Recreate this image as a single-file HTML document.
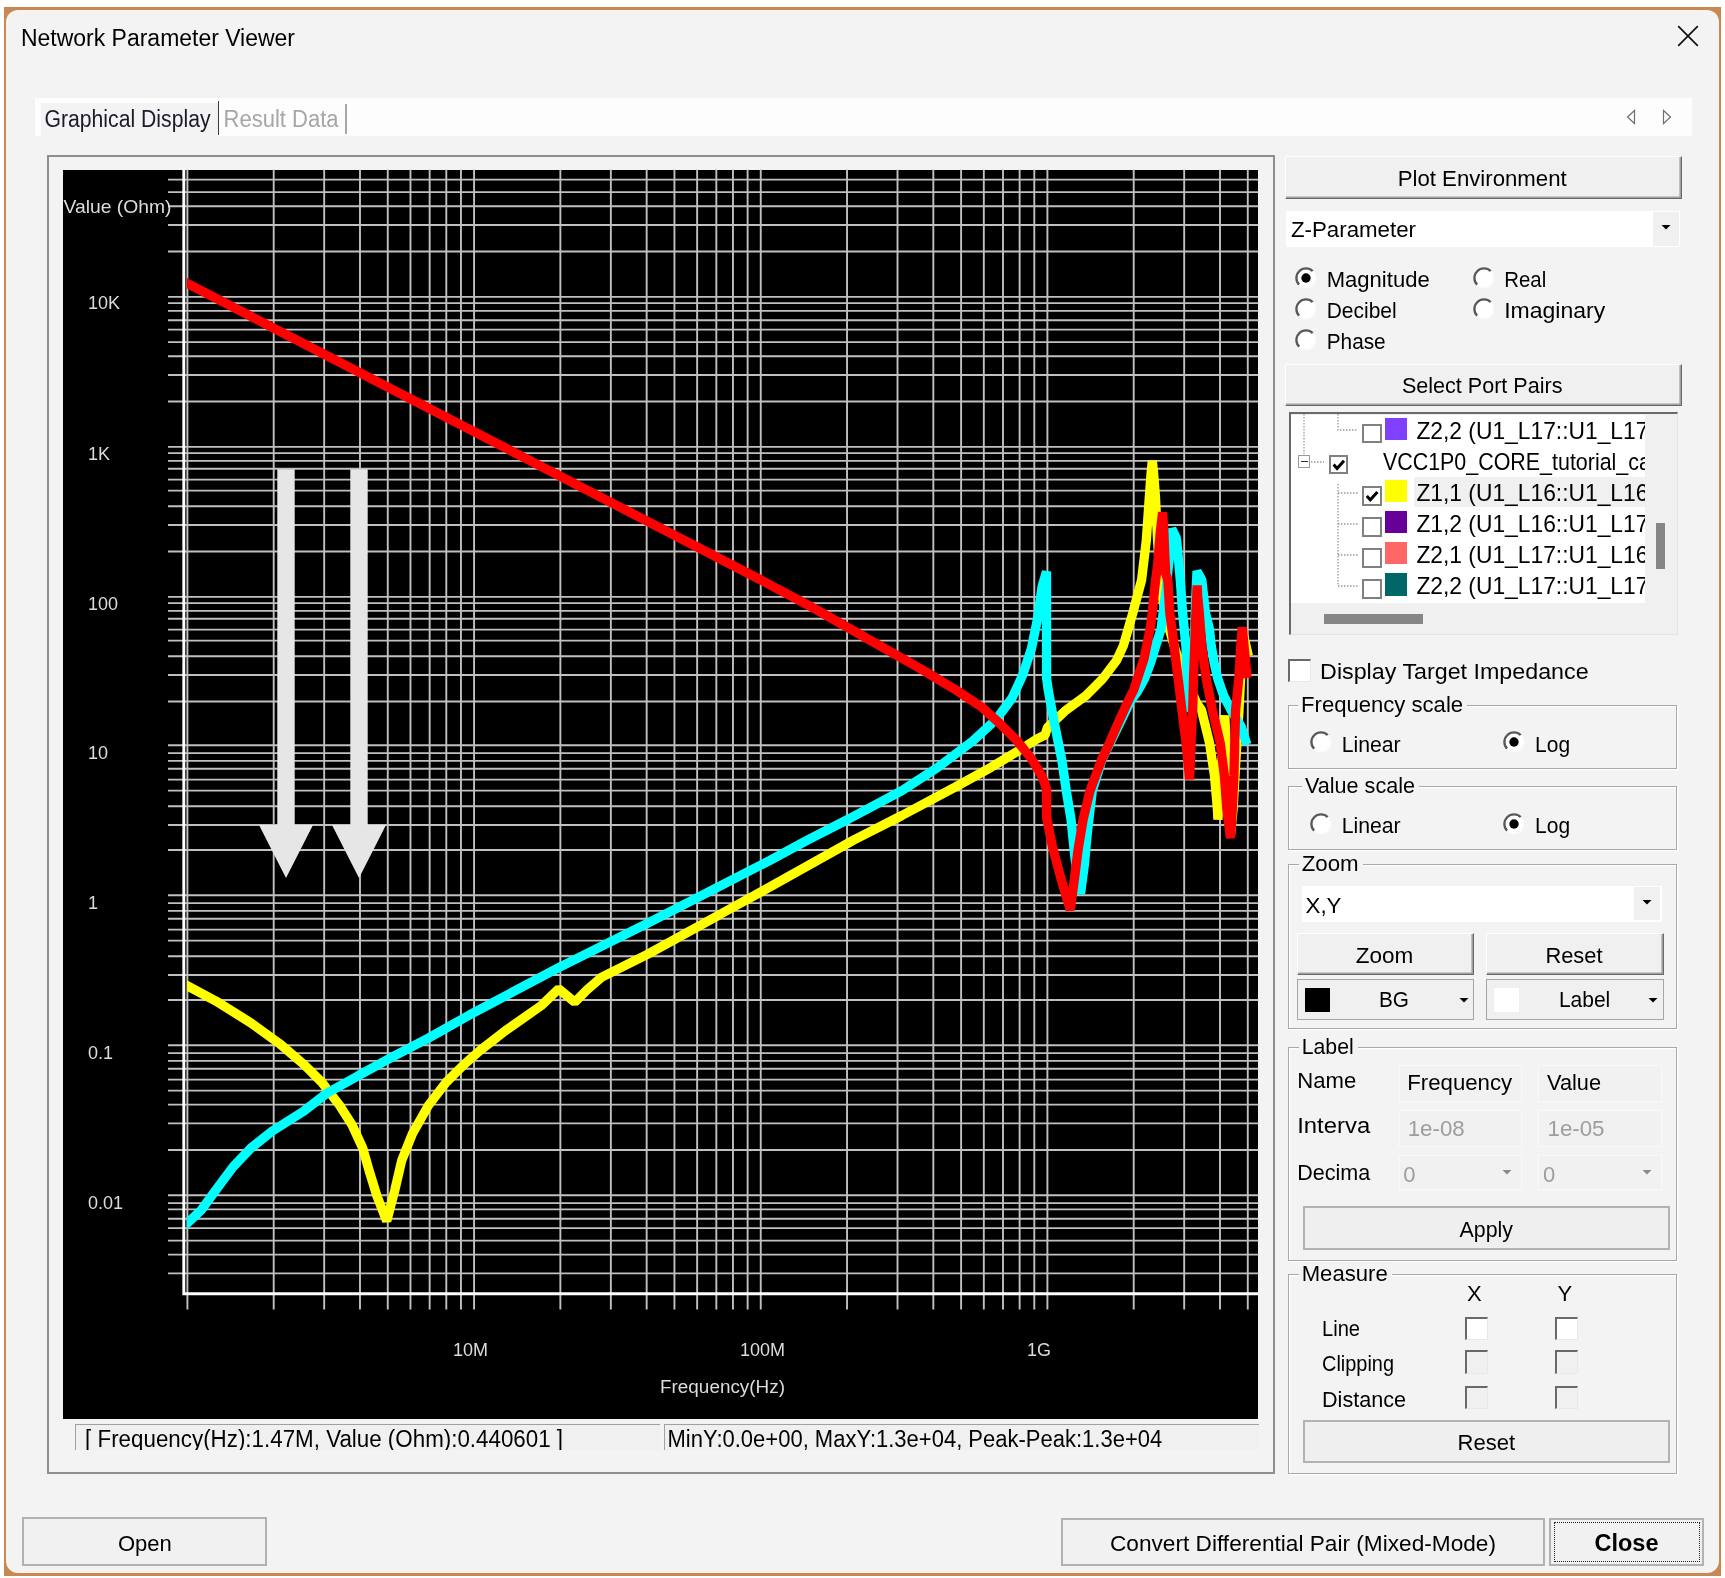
<!DOCTYPE html><html><head><meta charset="utf-8"><title>Network Parameter Viewer</title>
<style>html,body{margin:0;padding:0;background:#fff;}body{width:1725px;height:1578px;position:relative;overflow:hidden;font-family:"Liberation Sans", sans-serif;}div{box-sizing:border-box;}svg text{font-family:"Liberation Sans", sans-serif;}</style></head><body><div id="root" style="position:absolute;left:0;top:0;width:1725px;height:1578px;filter:blur(0.45px);">
<div style="position:absolute;left:4px;top:7.2px;width:1717.3px;height:1568.5px;background:#c98850;"></div>
<div style="position:absolute;left:6.4px;top:9.8px;width:1712.6px;height:1563.6px;background:#f3f3f3;border-radius:12px;"></div>
<div style="position:absolute;left:34.70px;top:97.80px;width:1657.00px;height:38.70px;background:#fdfdfd;"></div>
<div style="position:absolute;left:40.80px;top:103.10px;width:177.00px;height:33.40px;background:#f3f3f3;"></div>
<div style="position:absolute;left:217.60px;top:101.00px;width:1.60px;height:33.50px;background:#3c3c3c;"></div>
<div style="position:absolute;left:345.30px;top:104.00px;width:1.30px;height:30.00px;background:#a8a8a8;"></div>
<div style="position:absolute;left:46.60px;top:154.90px;width:1228.60px;height:1319.30px;border:2px solid #8e8e8e;"></div>
<div style="position:absolute;left:63.00px;top:169.60px;width:1195.40px;height:1249.60px;background:#000;"></div>
<svg width="1725" height="1578" viewBox="0 0 1725 1578" style="position:absolute;left:0;top:0">
<g stroke="#c0c0c0" stroke-width="1.9" fill="none" shape-rendering="geometricPrecision"><line x1="168" y1="179.66" x2="1258.4" y2="179.66"/><line x1="168" y1="192.16" x2="1258.4" y2="192.16"/><line x1="168" y1="206.22" x2="1258.4" y2="206.22"/><line x1="168" y1="224.97" x2="1258.4" y2="224.97"/><line x1="168" y1="251.54" x2="1258.4" y2="251.54"/><line x1="168" y1="296.85" x2="1258.4" y2="296.85"/><line x1="168" y1="303.10" x2="1258.4" y2="303.10"/><line x1="168" y1="310.91" x2="1258.4" y2="310.91"/><line x1="168" y1="320.29" x2="1258.4" y2="320.29"/><line x1="168" y1="329.66" x2="1258.4" y2="329.66"/><line x1="168" y1="342.16" x2="1258.4" y2="342.16"/><line x1="168" y1="356.22" x2="1258.4" y2="356.22"/><line x1="168" y1="374.97" x2="1258.4" y2="374.97"/><line x1="168" y1="401.54" x2="1258.4" y2="401.54"/><line x1="168" y1="446.85" x2="1258.4" y2="446.85"/><line x1="168" y1="453.10" x2="1258.4" y2="453.10"/><line x1="168" y1="460.91" x2="1258.4" y2="460.91"/><line x1="168" y1="468.72" x2="1258.4" y2="468.72"/><line x1="168" y1="479.66" x2="1258.4" y2="479.66"/><line x1="168" y1="490.60" x2="1258.4" y2="490.60"/><line x1="168" y1="506.22" x2="1258.4" y2="506.22"/><line x1="168" y1="524.97" x2="1258.4" y2="524.97"/><line x1="168" y1="551.54" x2="1258.4" y2="551.54"/><line x1="168" y1="596.85" x2="1258.4" y2="596.85"/><line x1="168" y1="603.10" x2="1258.4" y2="603.10"/><line x1="168" y1="610.91" x2="1258.4" y2="610.91"/><line x1="168" y1="618.72" x2="1258.4" y2="618.72"/><line x1="168" y1="629.66" x2="1258.4" y2="629.66"/><line x1="168" y1="640.60" x2="1258.4" y2="640.60"/><line x1="168" y1="656.22" x2="1258.4" y2="656.22"/><line x1="168" y1="674.97" x2="1258.4" y2="674.97"/><line x1="168" y1="701.54" x2="1258.4" y2="701.54"/><line x1="168" y1="745.29" x2="1258.4" y2="745.29"/><line x1="168" y1="753.10" x2="1258.4" y2="753.10"/><line x1="168" y1="760.91" x2="1258.4" y2="760.91"/><line x1="168" y1="768.72" x2="1258.4" y2="768.72"/><line x1="168" y1="779.66" x2="1258.4" y2="779.66"/><line x1="168" y1="790.60" x2="1258.4" y2="790.60"/><line x1="168" y1="806.22" x2="1258.4" y2="806.22"/><line x1="168" y1="824.97" x2="1258.4" y2="824.97"/><line x1="168" y1="849.97" x2="1258.4" y2="849.97"/><line x1="168" y1="895.29" x2="1258.4" y2="895.29"/><line x1="168" y1="903.10" x2="1258.4" y2="903.10"/><line x1="168" y1="910.91" x2="1258.4" y2="910.91"/><line x1="168" y1="918.72" x2="1258.4" y2="918.72"/><line x1="168" y1="929.66" x2="1258.4" y2="929.66"/><line x1="168" y1="940.60" x2="1258.4" y2="940.60"/><line x1="168" y1="956.22" x2="1258.4" y2="956.22"/><line x1="168" y1="974.97" x2="1258.4" y2="974.97"/><line x1="168" y1="999.97" x2="1258.4" y2="999.97"/><line x1="168" y1="1045.29" x2="1258.4" y2="1045.29"/><line x1="168" y1="1053.10" x2="1258.4" y2="1053.10"/><line x1="168" y1="1060.91" x2="1258.4" y2="1060.91"/><line x1="168" y1="1068.72" x2="1258.4" y2="1068.72"/><line x1="168" y1="1079.66" x2="1258.4" y2="1079.66"/><line x1="168" y1="1090.60" x2="1258.4" y2="1090.60"/><line x1="168" y1="1104.66" x2="1258.4" y2="1104.66"/><line x1="168" y1="1123.41" x2="1258.4" y2="1123.41"/><line x1="168" y1="1149.97" x2="1258.4" y2="1149.97"/><line x1="168" y1="1195.29" x2="1258.4" y2="1195.29"/><line x1="168" y1="1203.10" x2="1258.4" y2="1203.10"/><line x1="168" y1="1209.35" x2="1258.4" y2="1209.35"/><line x1="168" y1="1218.72" x2="1258.4" y2="1218.72"/><line x1="168" y1="1228.10" x2="1258.4" y2="1228.10"/><line x1="168" y1="1240.60" x2="1258.4" y2="1240.60"/><line x1="168" y1="1254.66" x2="1258.4" y2="1254.66"/><line x1="168" y1="1273.41" x2="1258.4" y2="1273.41"/><line x1="187.40" y1="169.6" x2="187.40" y2="1309.5"/><line x1="273.70" y1="169.6" x2="273.70" y2="1309.5"/><line x1="324.18" y1="169.6" x2="324.18" y2="1309.5"/><line x1="359.99" y1="169.6" x2="359.99" y2="1309.5"/><line x1="387.77" y1="169.6" x2="387.77" y2="1309.5"/><line x1="410.47" y1="169.6" x2="410.47" y2="1309.5"/><line x1="429.66" y1="169.6" x2="429.66" y2="1309.5"/><line x1="446.29" y1="169.6" x2="446.29" y2="1309.5"/><line x1="460.95" y1="169.6" x2="460.95" y2="1309.5"/><line x1="474.07" y1="169.6" x2="474.07" y2="1309.5"/><line x1="560.37" y1="169.6" x2="560.37" y2="1309.5"/><line x1="610.85" y1="169.6" x2="610.85" y2="1309.5"/><line x1="646.66" y1="169.6" x2="646.66" y2="1309.5"/><line x1="674.44" y1="169.6" x2="674.44" y2="1309.5"/><line x1="697.14" y1="169.6" x2="697.14" y2="1309.5"/><line x1="716.33" y1="169.6" x2="716.33" y2="1309.5"/><line x1="732.96" y1="169.6" x2="732.96" y2="1309.5"/><line x1="747.62" y1="169.6" x2="747.62" y2="1309.5"/><line x1="760.74" y1="169.6" x2="760.74" y2="1309.5"/><line x1="847.04" y1="169.6" x2="847.04" y2="1309.5"/><line x1="897.52" y1="169.6" x2="897.52" y2="1309.5"/><line x1="933.33" y1="169.6" x2="933.33" y2="1309.5"/><line x1="961.11" y1="169.6" x2="961.11" y2="1309.5"/><line x1="983.81" y1="169.6" x2="983.81" y2="1309.5"/><line x1="1003.00" y1="169.6" x2="1003.00" y2="1309.5"/><line x1="1019.63" y1="169.6" x2="1019.63" y2="1309.5"/><line x1="1034.29" y1="169.6" x2="1034.29" y2="1309.5"/><line x1="1047.41" y1="169.6" x2="1047.41" y2="1309.5"/><line x1="1133.71" y1="169.6" x2="1133.71" y2="1309.5"/><line x1="1184.19" y1="169.6" x2="1184.19" y2="1309.5"/><line x1="1220.00" y1="169.6" x2="1220.00" y2="1309.5"/><line x1="1247.78" y1="169.6" x2="1247.78" y2="1309.5"/></g>
<defs><clipPath id="pc"><rect x="187" y="170" width="1071" height="1123"/></clipPath></defs>
<path d="M183.8 169.6 V1293.8 H1258.4" stroke="#fff" stroke-width="2.9" fill="none"/>
<path d="M180.0 982.0 L187.1 985.7 L215.5 1000.8 L251.0 1023.0 L279.3 1043.4 L304.2 1064.7 L321.9 1082.4 L339.7 1105.5 L352.1 1125.0 L362.7 1148.0 L369.8 1172.9 L376.9 1195.9 L386.7 1221.0 L394.7 1190.6 L401.7 1160.5 L412.4 1133.8 L428.4 1105.5 L446.1 1082.4 L463.8 1064.7 L480.0 1050.5 L505.5 1030.6 L541.0 1005.8 L558.7 988.9 L574.7 1002.2 L587.1 989.8 L601.3 977.4 L647.4 954.3 L718.4 915.3 L770.0 886.9 L854.0 839.9 L901.9 815.5 L955.1 787.1 L990.6 767.6 L1017.2 751.6 L1036.7 739.2 L1045.0 735.0 L1047.5 727.5 L1064.9 711.1 L1085.8 695.8 L1102.5 679.0 L1116.5 660.5 L1123.3 645.9 L1132.8 613.0 L1141.6 580.0 L1146.3 540.6 L1149.4 496.1 L1151.1 473.1 L1152.3 460.7 L1153.6 473.1 L1155.4 496.1 L1157.6 541.0 L1161.0 590.0 L1168.0 625.0 L1176.0 652.0 L1186.0 678.0 L1196.9 703.6 L1201.5 710.0 L1209.5 742.9 L1214.5 775.9 L1217.4 808.8 L1217.9 819.6 L1224.8 715.4 L1230.5 835.0 L1233.1 808.8 L1236.4 751.2 L1239.0 710.0 L1241.0 670.0 L1243.0 633.0 L1248.4 656.0" stroke="#ffff00" stroke-width="9.3" fill="none" stroke-linejoin="bevel" stroke-linecap="butt" clip-path="url(#pc)"/>
<path d="M180.0 1229.0 L187.1 1223.4 L201.3 1210.1 L215.5 1190.6 L233.2 1166.7 L251.0 1148.0 L272.2 1131.2 L304.2 1110.8 L327.2 1093.0 L357.4 1076.2 L392.9 1056.7 L428.4 1038.1 L470.0 1014.7 L558.7 967.6 L647.4 923.3 L718.4 886.9 L770.0 860.3 L807.9 839.9 L848.7 819.0 L901.9 790.6 L937.4 767.6 L972.9 740.9 L995.9 719.7 L1011.9 698.4 L1022.6 675.3 L1031.4 648.7 L1037.6 618.5 L1042.1 586.6 L1046.5 571.5 L1046.6 678.0 L1048.2 690.0 L1054.3 722.9 L1061.8 760.0 L1066.3 790.9 L1071.1 820.0 L1075.0 858.0 L1080.5 894.0 L1084.5 863.7 L1086.8 838.0 L1088.8 820.0 L1092.3 790.9 L1098.1 772.4 L1101.8 760.0 L1119.9 722.9 L1130.6 700.7 L1137.2 692.0 L1144.5 678.8 L1150.7 662.4 L1155.7 645.9 L1161.0 629.4 L1163.5 610.0 L1166.0 590.0 L1169.0 560.0 L1171.8 528.8 L1176.3 538.0 L1177.5 548.8 L1180.3 580.0 L1182.6 613.0 L1185.9 645.9 L1187.2 678.8 L1187.3 712.0 L1190.0 680.0 L1194.5 640.0 L1195.5 604.7 L1197.0 571.3 L1201.8 580.0 L1205.5 613.0 L1209.5 629.4 L1211.2 645.9 L1214.1 662.4 L1217.8 678.8 L1223.5 695.3 L1231.0 710.0 L1241.1 726.5 L1246.9 744.6" stroke="#00ffff" stroke-width="9.3" fill="none" stroke-linejoin="bevel" stroke-linecap="butt" clip-path="url(#pc)"/>
<path d="M180.0 279.7 L187.7 283.7 L760.0 579.5 L813.2 607.9 L866.4 638.1 L919.7 668.2 L955.1 689.5 L981.8 707.2 L999.5 723.2 L1017.2 741.0 L1031.4 758.7 L1042.1 776.4 L1046.5 788.8 L1046.7 818.0 L1052.3 846.0 L1060.7 877.6 L1070.2 910.0 L1074.6 877.6 L1078.1 849.7 L1083.0 820.0 L1090.0 790.9 L1101.5 760.0 L1108.1 746.0 L1118.2 722.9 L1128.3 700.7 L1133.7 690.0 L1144.0 658.8 L1150.7 625.9 L1153.0 605.0 L1155.6 580.0 L1157.6 565.3 L1158.9 548.8 L1160.1 534.0 L1162.6 512.2 L1163.9 532.4 L1164.7 553.0 L1165.7 573.6 L1167.8 580.0 L1169.8 613.0 L1174.1 645.9 L1178.2 678.8 L1181.9 710.0 L1186.1 742.9 L1189.6 779.2 L1191.1 742.9 L1192.7 710.0 L1193.5 678.8 L1194.7 645.9 L1195.9 613.0 L1197.2 585.4 L1197.7 596.5 L1199.3 613.0 L1201.8 645.9 L1206.3 678.8 L1212.4 710.0 L1220.2 742.9 L1224.4 775.9 L1226.8 808.8 L1230.6 838.1 L1232.3 808.8 L1233.9 775.9 L1234.7 742.9 L1235.6 710.0 L1238.8 678.8 L1240.8 645.9 L1242.3 627.4 L1247.1 678.0" stroke="#ff0000" stroke-width="9.3" fill="none" stroke-linejoin="bevel" stroke-linecap="butt" clip-path="url(#pc)"/>
<path d="M277.3 469.3 H294.7 V825 H313 L286 878 L259 825 H277.3 Z" fill="#e6e6e6"/>
<path d="M350.3 469.3 H367.7 V825 H386 L359 878 L332 825 H350.3 Z" fill="#e6e6e6"/>
</svg>
<svg width="24" height="24" style="position:absolute;left:1676px;top:24px"><path d="M2.2 2.2 L21.8 21.8 M21.8 2.2 L2.2 21.8" stroke="#111" stroke-width="1.7" fill="none"/></svg>
<svg width="60" height="20" style="position:absolute;left:1620px;top:107px"><path d="M14.5 3.5 L7.5 10 L14.5 16.5 Z M43.5 3.5 L50.5 10 L43.5 16.5 Z" stroke="#707070" stroke-width="1.2" fill="none"/></svg>
<div style="position:absolute;left:75.20px;top:1423.70px;width:584.50px;height:26.00px;background:#f0f0f0;border-top:1.6px solid #a0a0a0;border-left:1.6px solid #a0a0a0;"></div>
<div style="position:absolute;left:663.70px;top:1423.70px;width:595.00px;height:26.00px;background:#f0f0f0;border-top:1.6px solid #a0a0a0;border-left:1.6px solid #a0a0a0;"></div>
<div style="position:absolute;left:76px;top:1425px;width:1182px;height:24.7px;overflow:hidden">
<svg width="1182" height="40" style="position:absolute;left:0;top:0"><text x="9.1" y="21.5" font-size="23" fill="#000" textLength="478" lengthAdjust="spacingAndGlyphs">[ Frequency(Hz):1.47M, Value (Ohm):0.440601 ]</text><text x="591.5" y="21.5" font-size="23" fill="#000" textLength="494.7" lengthAdjust="spacingAndGlyphs">MinY:0.0e+00, MaxY:1.3e+04, Peak-Peak:1.3e+04</text></svg></div>
<div style="position:absolute;left:1284.50px;top:156.40px;width:397.50px;height:43.00px;background:#f0f0f0;border-top:1.6px solid #fff;border-left:1.6px solid #fff;border-right:1.6px solid #696969;border-bottom:1.6px solid #696969;box-shadow:inset -1.6px -1.6px 0 #a0a0a0;"></div>
<div style="position:absolute;left:1285.80px;top:210.70px;width:394.20px;height:36.10px;background:#fff;"></div>
<div style="position:absolute;left:1652.50px;top:212.00px;width:26.50px;height:33.50px;background:#f0f0f0;"></div>
<svg width="14" height="10" style="position:absolute;left:1658.5px;top:223.0px"><path d="M2.5 2 H11.5 L7 6.5 Z" fill="#000"/></svg>
<svg width="26" height="26" style="position:absolute;left:1292.6px;top:264.5px"><circle cx="13" cy="13" r="9.6" fill="#fff"/><path d="M6.21 19.79 A9.6 9.6 0 0 1 19.79 6.21" stroke="#585858" stroke-width="2.3" fill="none"/><path d="M6.21 19.79 A9.6 9.6 0 0 0 19.79 6.21" stroke="#fbfbfb" stroke-width="1.8" fill="none"/><circle cx="13" cy="13" r="4.7" fill="#000"/></svg>
<svg width="26" height="26" style="position:absolute;left:1292.6px;top:295.5px"><circle cx="13" cy="13" r="9.6" fill="#fff"/><path d="M6.21 19.79 A9.6 9.6 0 0 1 19.79 6.21" stroke="#585858" stroke-width="2.3" fill="none"/><path d="M6.21 19.79 A9.6 9.6 0 0 0 19.79 6.21" stroke="#fbfbfb" stroke-width="1.8" fill="none"/></svg>
<svg width="26" height="26" style="position:absolute;left:1292.6px;top:326.5px"><circle cx="13" cy="13" r="9.6" fill="#fff"/><path d="M6.21 19.79 A9.6 9.6 0 0 1 19.79 6.21" stroke="#585858" stroke-width="2.3" fill="none"/><path d="M6.21 19.79 A9.6 9.6 0 0 0 19.79 6.21" stroke="#fbfbfb" stroke-width="1.8" fill="none"/></svg>
<svg width="26" height="26" style="position:absolute;left:1470.7px;top:264.5px"><circle cx="13" cy="13" r="9.6" fill="#fff"/><path d="M6.21 19.79 A9.6 9.6 0 0 1 19.79 6.21" stroke="#585858" stroke-width="2.3" fill="none"/><path d="M6.21 19.79 A9.6 9.6 0 0 0 19.79 6.21" stroke="#fbfbfb" stroke-width="1.8" fill="none"/></svg>
<svg width="26" height="26" style="position:absolute;left:1470.7px;top:295.5px"><circle cx="13" cy="13" r="9.6" fill="#fff"/><path d="M6.21 19.79 A9.6 9.6 0 0 1 19.79 6.21" stroke="#585858" stroke-width="2.3" fill="none"/><path d="M6.21 19.79 A9.6 9.6 0 0 0 19.79 6.21" stroke="#fbfbfb" stroke-width="1.8" fill="none"/></svg>
<div style="position:absolute;left:1284.50px;top:363.70px;width:397.50px;height:42.70px;background:#f0f0f0;border-top:1.6px solid #fff;border-left:1.6px solid #fff;border-right:1.6px solid #696969;border-bottom:1.6px solid #696969;box-shadow:inset -1.6px -1.6px 0 #a0a0a0;"></div>
<div style="position:absolute;left:1288.50px;top:411.90px;width:389.00px;height:223.00px;background:#f0f0f0;border-top:2.6px solid #696969;border-left:2.6px solid #696969;border-right:1.6px solid #e3e3e3;border-bottom:1.6px solid #e3e3e3;"></div>
<div style="position:absolute;left:1291.00px;top:414.50px;width:353.60px;height:188.60px;background:#fff;"></div>
<div style="position:absolute;left:1413.80px;top:476.50px;width:230.80px;height:30.30px;background:#f0f0f0;"></div>
<div style="position:absolute;left:1655.60px;top:522.70px;width:9.60px;height:46.10px;background:#868686;"></div>
<div style="position:absolute;left:1323.50px;top:614.20px;width:99.00px;height:9.50px;background:#868686;"></div>
<svg width="120" height="200" style="position:absolute;left:1291px;top:414px" fill="none" stroke="#9a9a9a" stroke-width="1.3" stroke-dasharray="1.5 1.5"><path d="M13 0 V40 M47 0 V16 H67 M20 48 H33 M47 70 V172 M47 79 H67 M47 110 H67 M47 141 H67 M47 172 H67"/></svg>
<div style="position:absolute;left:1297.70px;top:455.00px;width:12.60px;height:12.60px;background:#fff;border:1.3px solid #9a9a9a;"></div>
<div style="position:absolute;left:1300.50px;top:460.60px;width:7.00px;height:1.60px;background:#333;"></div>
<div style="position:absolute;left:1291px;top:414.5px;width:353.6px;height:188.6px;overflow:hidden">
<div style="position:absolute;left:94.3px;top:3.4px;width:22px;height:22.2px;background:#8040ff"></div>
<div style="position:absolute;left:94.3px;top:65.6px;width:22px;height:22.2px;background:#ffff00"></div>
<div style="position:absolute;left:94.3px;top:96.7px;width:22px;height:22.2px;background:#660099"></div>
<div style="position:absolute;left:94.3px;top:127.8px;width:22px;height:22.2px;background:#ff6666"></div>
<div style="position:absolute;left:94.3px;top:158.9px;width:22px;height:22.2px;background:#006666"></div>
</div>
<div style="position:absolute;left:1362.30px;top:423.70px;width:19.80px;height:19.80px;background:#fff;border:2.6px solid #808080;"></div>
<div style="position:absolute;left:1362.30px;top:485.90px;width:19.80px;height:19.80px;background:#fff;border:2.6px solid #808080;"></div>
<svg width="19.8" height="19.8" style="position:absolute;left:1362.3px;top:485.9px"><path d="M4.752 9.9 L8.316 13.86 L15.444 5.94" stroke="#000" stroke-width="3" fill="none"/></svg>
<div style="position:absolute;left:1362.30px;top:517.00px;width:19.80px;height:19.80px;background:#fff;border:2.6px solid #808080;"></div>
<div style="position:absolute;left:1362.30px;top:548.10px;width:19.80px;height:19.80px;background:#fff;border:2.6px solid #808080;"></div>
<div style="position:absolute;left:1362.30px;top:579.20px;width:19.80px;height:19.80px;background:#fff;border:2.6px solid #808080;"></div>
<div style="position:absolute;left:1328.60px;top:454.60px;width:19.20px;height:19.20px;background:#fff;border:2.6px solid #808080;"></div>
<svg width="19.2" height="19.2" style="position:absolute;left:1328.6px;top:454.6px"><path d="M4.608 9.6 L8.064 13.44 L14.975999999999999 5.76" stroke="#000" stroke-width="3" fill="none"/></svg>
<div style="position:absolute;left:1291px;top:414.5px;width:353.6px;height:188.6px;overflow:hidden"><svg width="500" height="200" style="position:absolute;left:0;top:0">
<text x="125.4" y="23.7" font-size="24.5" fill="#000" textLength="232" lengthAdjust="spacingAndGlyphs">Z2,2 (U1_L17::U1_L17</text>
<text x="125.4" y="85.9" font-size="24.5" fill="#000" textLength="232" lengthAdjust="spacingAndGlyphs">Z1,1 (U1_L16::U1_L16</text>
<text x="125.4" y="117.0" font-size="24.5" fill="#000" textLength="232" lengthAdjust="spacingAndGlyphs">Z1,2 (U1_L16::U1_L17</text>
<text x="125.4" y="148.1" font-size="24.5" fill="#000" textLength="232" lengthAdjust="spacingAndGlyphs">Z2,1 (U1_L17::U1_L16</text>
<text x="125.4" y="179.2" font-size="24.5" fill="#000" textLength="232" lengthAdjust="spacingAndGlyphs">Z2,2 (U1_L17::U1_L17</text>
<text x="91.9" y="54.6" font-size="24.5" fill="#000" textLength="268" lengthAdjust="spacingAndGlyphs">VCC1P0_CORE_tutorial_ca</text>
</svg></div>
<div style="position:absolute;left:1288.00px;top:658.50px;width:23.00px;height:23.00px;background:#fff;border-top:2.4px solid #696969;border-left:2.4px solid #696969;border-right:1.6px solid #e8e8e8;border-bottom:1.6px solid #e8e8e8;"></div>
<div style="position:absolute;left:1287.90px;top:705.40px;width:389.60px;height:63.30px;border:1.9px solid #a9a9a9;box-shadow:1.3px 1.3px 0 #fff, inset 1.3px 1.3px 0 #fff;"></div>
<div style="position:absolute;left:1298.10px;top:693.40px;width:169.00px;height:24.00px;background:#f3f3f3;"></div>
<svg width="26" height="26" style="position:absolute;left:1308.4px;top:729.4px"><circle cx="13" cy="13" r="9.6" fill="#fff"/><path d="M6.21 19.79 A9.6 9.6 0 0 1 19.79 6.21" stroke="#585858" stroke-width="2.3" fill="none"/><path d="M6.21 19.79 A9.6 9.6 0 0 0 19.79 6.21" stroke="#fbfbfb" stroke-width="1.8" fill="none"/></svg>
<svg width="26" height="26" style="position:absolute;left:1501.0px;top:729.4px"><circle cx="13" cy="13" r="9.6" fill="#fff"/><path d="M6.21 19.79 A9.6 9.6 0 0 1 19.79 6.21" stroke="#585858" stroke-width="2.3" fill="none"/><path d="M6.21 19.79 A9.6 9.6 0 0 0 19.79 6.21" stroke="#fbfbfb" stroke-width="1.8" fill="none"/><circle cx="13" cy="13" r="4.7" fill="#000"/></svg>
<div style="position:absolute;left:1287.90px;top:786.40px;width:389.60px;height:63.30px;border:1.9px solid #a9a9a9;box-shadow:1.3px 1.3px 0 #fff, inset 1.3px 1.3px 0 #fff;"></div>
<div style="position:absolute;left:1302.00px;top:774.40px;width:117.00px;height:24.00px;background:#f3f3f3;"></div>
<svg width="26" height="26" style="position:absolute;left:1308.4px;top:810.6px"><circle cx="13" cy="13" r="9.6" fill="#fff"/><path d="M6.21 19.79 A9.6 9.6 0 0 1 19.79 6.21" stroke="#585858" stroke-width="2.3" fill="none"/><path d="M6.21 19.79 A9.6 9.6 0 0 0 19.79 6.21" stroke="#fbfbfb" stroke-width="1.8" fill="none"/></svg>
<svg width="26" height="26" style="position:absolute;left:1501.0px;top:810.6px"><circle cx="13" cy="13" r="9.6" fill="#fff"/><path d="M6.21 19.79 A9.6 9.6 0 0 1 19.79 6.21" stroke="#585858" stroke-width="2.3" fill="none"/><path d="M6.21 19.79 A9.6 9.6 0 0 0 19.79 6.21" stroke="#fbfbfb" stroke-width="1.8" fill="none"/><circle cx="13" cy="13" r="4.7" fill="#000"/></svg>
<div style="position:absolute;left:1287.90px;top:864.40px;width:389.60px;height:165.00px;border:1.9px solid #a9a9a9;box-shadow:1.3px 1.3px 0 #fff, inset 1.3px 1.3px 0 #fff;"></div>
<div style="position:absolute;left:1298.70px;top:852.40px;width:64.00px;height:24.00px;background:#f3f3f3;"></div>
<div style="position:absolute;left:1301.70px;top:885.60px;width:360.80px;height:36.10px;background:#fff;"></div>
<div style="position:absolute;left:1634.00px;top:887.00px;width:26.40px;height:33.40px;background:#f0f0f0;"></div>
<svg width="14" height="10" style="position:absolute;left:1640.0px;top:898.0px"><path d="M2.5 2 H11.5 L7 6.5 Z" fill="#000"/></svg>
<div style="position:absolute;left:1297.20px;top:933.30px;width:176.70px;height:42.00px;background:#f0f0f0;border-top:1.6px solid #fff;border-left:1.6px solid #fff;border-right:1.6px solid #696969;border-bottom:1.6px solid #696969;box-shadow:inset -1.6px -1.6px 0 #a0a0a0;"></div>
<div style="position:absolute;left:1486.30px;top:933.30px;width:177.50px;height:42.00px;background:#f0f0f0;border-top:1.6px solid #fff;border-left:1.6px solid #fff;border-right:1.6px solid #696969;border-bottom:1.6px solid #696969;box-shadow:inset -1.6px -1.6px 0 #a0a0a0;"></div>
<div style="position:absolute;left:1297.20px;top:978.70px;width:176.70px;height:41.40px;background:#f0f0f0;border:1.7px solid #a6a6a6;"></div>
<div style="position:absolute;left:1486.30px;top:978.70px;width:177.50px;height:41.40px;background:#f0f0f0;border:1.7px solid #a6a6a6;"></div>
<div style="position:absolute;left:1304.80px;top:987.70px;width:24.80px;height:24.80px;background:#000;"></div>
<div style="position:absolute;left:1494.20px;top:987.70px;width:25.00px;height:24.80px;background:#fff;"></div>
<svg width="14" height="10" style="position:absolute;left:1456.9px;top:995.5px"><path d="M2.5 2 H11.5 L7 6.5 Z" fill="#000"/></svg>
<svg width="14" height="10" style="position:absolute;left:1646.3px;top:995.5px"><path d="M2.5 2 H11.5 L7 6.5 Z" fill="#000"/></svg>
<div style="position:absolute;left:1287.90px;top:1047.10px;width:389.60px;height:213.70px;border:1.9px solid #a9a9a9;box-shadow:1.3px 1.3px 0 #fff, inset 1.3px 1.3px 0 #fff;"></div>
<div style="position:absolute;left:1298.70px;top:1035.10px;width:59.00px;height:24.00px;background:#f3f3f3;"></div>
<div style="position:absolute;left:1398.50px;top:1064.80px;width:123.40px;height:36.90px;background:#f1f1f1;border:1.6px solid #f9f9f9;"></div>
<div style="position:absolute;left:1537.70px;top:1064.80px;width:124.00px;height:36.90px;background:#f1f1f1;border:1.6px solid #f9f9f9;"></div>
<div style="position:absolute;left:1398.50px;top:1109.90px;width:123.40px;height:37.00px;background:#f1f1f1;border:1.6px solid #f9f9f9;"></div>
<div style="position:absolute;left:1537.70px;top:1109.90px;width:124.00px;height:37.00px;background:#f1f1f1;border:1.6px solid #f9f9f9;"></div>
<div style="position:absolute;left:1398.50px;top:1155.30px;width:123.40px;height:35.10px;background:#f1f1f1;border:1.6px solid #f9f9f9;"></div>
<div style="position:absolute;left:1537.70px;top:1155.30px;width:124.00px;height:35.10px;background:#f1f1f1;border:1.6px solid #f9f9f9;"></div>
<svg width="14" height="10" style="position:absolute;left:1500.4px;top:1168.0px"><path d="M2.5 2 H11.5 L7 6.5 Z" fill="#8a8a8a"/></svg>
<svg width="14" height="10" style="position:absolute;left:1640.2px;top:1168.0px"><path d="M2.5 2 H11.5 L7 6.5 Z" fill="#8a8a8a"/></svg>
<div style="position:absolute;left:1303.00px;top:1206.20px;width:366.60px;height:44.10px;background:#efefef;border:2px solid #b2b2b2;"></div>
<div style="position:absolute;left:1287.90px;top:1274.30px;width:389.60px;height:199.90px;border:1.9px solid #a9a9a9;box-shadow:1.3px 1.3px 0 #fff, inset 1.3px 1.3px 0 #fff;"></div>
<div style="position:absolute;left:1298.70px;top:1262.30px;width:93.00px;height:24.00px;background:#f3f3f3;"></div>
<div style="position:absolute;left:1464.70px;top:1316.50px;width:23.50px;height:23.50px;background:#fff;border-top:2.4px solid #696969;border-left:2.4px solid #696969;border-right:1.6px solid #e8e8e8;border-bottom:1.6px solid #e8e8e8;"></div>
<div style="position:absolute;left:1554.90px;top:1316.50px;width:23.50px;height:23.50px;background:#fff;border-top:2.4px solid #696969;border-left:2.4px solid #696969;border-right:1.6px solid #e8e8e8;border-bottom:1.6px solid #e8e8e8;"></div>
<div style="position:absolute;left:1464.70px;top:1350.20px;width:23.50px;height:23.50px;background:#f0f0f0;border-top:2.4px solid #696969;border-left:2.4px solid #696969;border-right:1.6px solid #e8e8e8;border-bottom:1.6px solid #e8e8e8;"></div>
<div style="position:absolute;left:1554.90px;top:1350.20px;width:23.50px;height:23.50px;background:#f0f0f0;border-top:2.4px solid #696969;border-left:2.4px solid #696969;border-right:1.6px solid #e8e8e8;border-bottom:1.6px solid #e8e8e8;"></div>
<div style="position:absolute;left:1464.70px;top:1385.80px;width:23.50px;height:23.50px;background:#f0f0f0;border-top:2.4px solid #696969;border-left:2.4px solid #696969;border-right:1.6px solid #e8e8e8;border-bottom:1.6px solid #e8e8e8;"></div>
<div style="position:absolute;left:1554.90px;top:1385.80px;width:23.50px;height:23.50px;background:#f0f0f0;border-top:2.4px solid #696969;border-left:2.4px solid #696969;border-right:1.6px solid #e8e8e8;border-bottom:1.6px solid #e8e8e8;"></div>
<div style="position:absolute;left:1303.00px;top:1419.60px;width:366.60px;height:43.50px;background:#efefef;border:2px solid #b2b2b2;"></div>
<div style="position:absolute;left:22.30px;top:1517.10px;width:245.20px;height:49.20px;background:#f1f1f1;border:2px solid #b2b2b2;"></div>
<div style="position:absolute;left:1060.70px;top:1517.70px;width:484.60px;height:48.70px;background:#f1f1f1;border:2px solid #b2b2b2;"></div>
<div style="position:absolute;left:1549.40px;top:1517.70px;width:154.20px;height:48.70px;background:#f1f1f1;border:2px solid #b2b2b2;"></div>
<div style="position:absolute;left:1553.50px;top:1522.00px;width:146.00px;height:40.00px;border:1.6px dotted #222;"></div>
<svg width="1725" height="1578" viewBox="0 0 1725 1578" style="position:absolute;left:0;top:0;pointer-events:none"><text x="63.5" y="212.7" font-size="19" fill="#dcdcdc" font-weight="normal" text-anchor="start" textLength="108.0" lengthAdjust="spacingAndGlyphs" >Value (Ohm)</text><text x="88.0" y="309.0" font-size="18" fill="#dcdcdc" font-weight="normal" text-anchor="start" >10K</text><text x="88.0" y="459.8" font-size="18" fill="#dcdcdc" font-weight="normal" text-anchor="start" >1K</text><text x="88.0" y="609.5" font-size="18" fill="#dcdcdc" font-weight="normal" text-anchor="start" >100</text><text x="88.0" y="758.5" font-size="18" fill="#dcdcdc" font-weight="normal" text-anchor="start" >10</text><text x="88.0" y="908.5" font-size="18" fill="#dcdcdc" font-weight="normal" text-anchor="start" >1</text><text x="88.0" y="1059.0" font-size="18" fill="#dcdcdc" font-weight="normal" text-anchor="start" >0.1</text><text x="88.0" y="1208.5" font-size="18" fill="#dcdcdc" font-weight="normal" text-anchor="start" >0.01</text><text x="453.0" y="1356.0" font-size="18" fill="#dcdcdc" font-weight="normal" text-anchor="start" >10M</text><text x="740.0" y="1356.0" font-size="18" fill="#dcdcdc" font-weight="normal" text-anchor="start" >100M</text><text x="1027.0" y="1356.0" font-size="18" fill="#dcdcdc" font-weight="normal" text-anchor="start" >1G</text><text x="660.0" y="1393.0" font-size="18" fill="#dcdcdc" font-weight="normal" text-anchor="start" textLength="125.0" lengthAdjust="spacingAndGlyphs" >Frequency(Hz)</text><text x="21.0" y="45.8" font-size="23.5" fill="#000" font-weight="normal" text-anchor="start" textLength="274.0" lengthAdjust="spacingAndGlyphs" >Network Parameter Viewer</text><text x="44.5" y="127.1" font-size="23.5" fill="#1a1a2a" font-weight="normal" text-anchor="start" textLength="166.0" lengthAdjust="spacingAndGlyphs" >Graphical Display</text><text x="223.5" y="127.1" font-size="23.5" fill="#a6a6a6" font-weight="normal" text-anchor="start" textLength="115.0" lengthAdjust="spacingAndGlyphs" >Result Data</text><text x="1482.2" y="186.3" font-size="22" fill="#000" font-weight="normal" text-anchor="middle" textLength="169.0" lengthAdjust="spacingAndGlyphs" >Plot Environment</text><text x="1291.0" y="237.0" font-size="22" fill="#000" font-weight="normal" text-anchor="start" textLength="125.0" lengthAdjust="spacingAndGlyphs" >Z-Parameter</text><text x="1326.7" y="286.9" font-size="22" fill="#000" font-weight="normal" text-anchor="start" textLength="103.0" lengthAdjust="spacingAndGlyphs" >Magnitude</text><text x="1326.7" y="317.8" font-size="22" fill="#000" font-weight="normal" text-anchor="start" textLength="70.0" lengthAdjust="spacingAndGlyphs" >Decibel</text><text x="1326.7" y="348.9" font-size="22" fill="#000" font-weight="normal" text-anchor="start" textLength="59.0" lengthAdjust="spacingAndGlyphs" >Phase</text><text x="1504.2" y="286.9" font-size="22" fill="#000" font-weight="normal" text-anchor="start" textLength="42.0" lengthAdjust="spacingAndGlyphs" >Real</text><text x="1504.2" y="317.8" font-size="22" fill="#000" font-weight="normal" text-anchor="start" textLength="101.0" lengthAdjust="spacingAndGlyphs" >Imaginary</text><text x="1482.2" y="393.4" font-size="22" fill="#000" font-weight="normal" text-anchor="middle" textLength="160.6" lengthAdjust="spacingAndGlyphs" >Select Port Pairs</text><text x="1320.1" y="678.8" font-size="22" fill="#000" font-weight="normal" text-anchor="start" textLength="268.5" lengthAdjust="spacingAndGlyphs" >Display Target Impedance</text><text x="1301.1" y="712.0" font-size="22" fill="#000" font-weight="normal" text-anchor="start" textLength="162.0" lengthAdjust="spacingAndGlyphs" >Frequency scale</text><text x="1341.7" y="751.8" font-size="22" fill="#000" font-weight="normal" text-anchor="start" textLength="59.0" lengthAdjust="spacingAndGlyphs" >Linear</text><text x="1535.1" y="751.8" font-size="22" fill="#000" font-weight="normal" text-anchor="start" textLength="35.0" lengthAdjust="spacingAndGlyphs" >Log</text><text x="1305.0" y="793.0" font-size="22" fill="#000" font-weight="normal" text-anchor="start" textLength="110.0" lengthAdjust="spacingAndGlyphs" >Value scale</text><text x="1341.7" y="833.1" font-size="22" fill="#000" font-weight="normal" text-anchor="start" textLength="59.0" lengthAdjust="spacingAndGlyphs" >Linear</text><text x="1535.1" y="833.1" font-size="22" fill="#000" font-weight="normal" text-anchor="start" textLength="35.0" lengthAdjust="spacingAndGlyphs" >Log</text><text x="1301.7" y="871.0" font-size="22" fill="#000" font-weight="normal" text-anchor="start" textLength="57.0" lengthAdjust="spacingAndGlyphs" >Zoom</text><text x="1305.5" y="912.5" font-size="22" fill="#000" font-weight="normal" text-anchor="start" textLength="36.0" lengthAdjust="spacingAndGlyphs" >X,Y</text><text x="1384.5" y="962.7" font-size="22" fill="#000" font-weight="normal" text-anchor="middle" textLength="57.5" lengthAdjust="spacingAndGlyphs" >Zoom</text><text x="1574.0" y="962.7" font-size="22" fill="#000" font-weight="normal" text-anchor="middle" textLength="57.2" lengthAdjust="spacingAndGlyphs" >Reset</text><text x="1394.0" y="1007.2" font-size="22" fill="#000" font-weight="normal" text-anchor="middle" textLength="30.0" lengthAdjust="spacingAndGlyphs" >BG</text><text x="1584.6" y="1007.2" font-size="22" fill="#000" font-weight="normal" text-anchor="middle" textLength="51.4" lengthAdjust="spacingAndGlyphs" >Label</text><text x="1301.7" y="1053.7" font-size="22" fill="#000" font-weight="normal" text-anchor="start" textLength="52.0" lengthAdjust="spacingAndGlyphs" >Label</text><text x="1297.2" y="1087.8" font-size="22" fill="#000" font-weight="normal" text-anchor="start" textLength="59.0" lengthAdjust="spacingAndGlyphs" >Name</text><text x="1297.2" y="1133.4" font-size="22" fill="#000" font-weight="normal" text-anchor="start" textLength="73.0" lengthAdjust="spacingAndGlyphs" >Interva</text><text x="1297.2" y="1179.6" font-size="22" fill="#000" font-weight="normal" text-anchor="start" textLength="73.0" lengthAdjust="spacingAndGlyphs" >Decima</text><text x="1407.2" y="1090.0" font-size="22" fill="#000" font-weight="normal" text-anchor="start" textLength="105.0" lengthAdjust="spacingAndGlyphs" >Frequency</text><text x="1547.0" y="1090.0" font-size="22" fill="#000" font-weight="normal" text-anchor="start" textLength="54.0" lengthAdjust="spacingAndGlyphs" >Value</text><text x="1407.7" y="1135.5" font-size="22" fill="#9d9d9d" font-weight="normal" text-anchor="start" textLength="57.0" lengthAdjust="spacingAndGlyphs" >1e-08</text><text x="1547.5" y="1135.5" font-size="22" fill="#9d9d9d" font-weight="normal" text-anchor="start" textLength="57.0" lengthAdjust="spacingAndGlyphs" >1e-05</text><text x="1403.2" y="1182.0" font-size="22" fill="#9d9d9d" font-weight="normal" text-anchor="start" >0</text><text x="1543.0" y="1182.0" font-size="22" fill="#9d9d9d" font-weight="normal" text-anchor="start" >0</text><text x="1486.3" y="1237.2" font-size="22" fill="#000" font-weight="normal" text-anchor="middle" textLength="53.5" lengthAdjust="spacingAndGlyphs" >Apply</text><text x="1301.7" y="1280.9" font-size="22" fill="#000" font-weight="normal" text-anchor="start" textLength="86.0" lengthAdjust="spacingAndGlyphs" >Measure</text><text x="1474.4" y="1301.4" font-size="22" fill="#000" font-weight="normal" text-anchor="middle" >X</text><text x="1564.9" y="1301.4" font-size="22" fill="#000" font-weight="normal" text-anchor="middle" >Y</text><text x="1322.0" y="1336.2" font-size="22" fill="#000" font-weight="normal" text-anchor="start" textLength="38.0" lengthAdjust="spacingAndGlyphs" >Line</text><text x="1322.0" y="1371.1" font-size="22" fill="#000" font-weight="normal" text-anchor="start" textLength="72.0" lengthAdjust="spacingAndGlyphs" >Clipping</text><text x="1322.0" y="1406.7" font-size="22" fill="#000" font-weight="normal" text-anchor="start" textLength="84.0" lengthAdjust="spacingAndGlyphs" >Distance</text><text x="1486.3" y="1450.2" font-size="22" fill="#000" font-weight="normal" text-anchor="middle" textLength="57.5" lengthAdjust="spacingAndGlyphs" >Reset</text><text x="144.9" y="1550.6" font-size="22" fill="#000" font-weight="normal" text-anchor="middle" textLength="53.9" lengthAdjust="spacingAndGlyphs" >Open</text><text x="1303.0" y="1551.0" font-size="22" fill="#000" font-weight="normal" text-anchor="middle" textLength="386.0" lengthAdjust="spacingAndGlyphs" >Convert Differential Pair (Mixed-Mode)</text><text x="1626.5" y="1551.0" font-size="23" fill="#000" font-weight="bold" text-anchor="middle" textLength="64.0" lengthAdjust="spacingAndGlyphs" >Close</text></svg>
</div></body></html>
